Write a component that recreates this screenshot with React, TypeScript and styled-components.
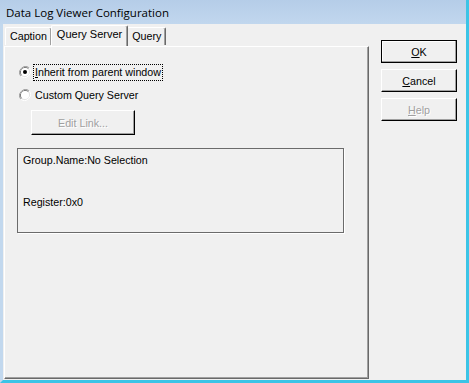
import styled, { createGlobalStyle } from "styled-components";

const GlobalStyle = createGlobalStyle`
  html, body {
    margin: 0;
    padding: 0;
    background: #f0f0f0;
    overflow: hidden;
  }
  * {
    box-sizing: border-box;
  }
`;

const Window = styled.div`
  width: 469px;
  height: 383px;
  display: flex;
  flex-direction: column;
  font-family: "Liberation Sans", Arial, sans-serif;
  font-size: 10.7px;
  color: #000;
  background: #f0f0f0;
`;

const TitleBar = styled.div`
  height: 24px;
  flex-shrink: 0;
  display: flex;
  align-items: center;
  padding-left: 6px;
  background: linear-gradient(#b5cde8, #c1d7ee);
  border-right: 3px solid #3cc4e6;
  font-family: "Open Sans", "Liberation Sans", sans-serif;
  font-size: 11.5px;
  color: #000;
`;

const Body = styled.div`
  flex: 1;
  display: flex;
  min-height: 0;
  border-left: 3px solid #c2d8ee;
  border-right: 3px solid #3cc4e6;
  border-bottom: 3px solid #3cc4e6;
  padding: 1px 0 1px 1px;
`;

const TabControl = styled.div`
  width: 365px;
  display: flex;
  flex-direction: column;
`;

const TabStrip = styled.div`
  height: 21px;
  display: flex;
  align-items: flex-end;
  padding-left: 1px;
  position: relative;
  z-index: 1;
`;

const Tab = styled.div<{ $active?: boolean }>`
  height: ${(p) => (p.$active ? 21 : 18)}px;
  padding: ${(p) => (p.$active ? "2px 5px 0" : "2px 4px 0")};
  margin: ${(p) => (p.$active ? "0 -1px 0 -1px" : "0 0 1px")};
  background: #f0f0f0;
  border-top: 1px solid #fff;
  border-left: 1px solid #fff;
  border-right: 1px solid #696969;
  box-shadow: inset -1px 0 0 #a0a0a0;
  border-radius: 2px 2px 0 0;
  white-space: nowrap;
  font-size: ${(p) => (p.$active ? 11 : 10.7)}px;
  position: relative;
  z-index: ${(p) => (p.$active ? 2 : 1)};
`;

const Panel = styled.div`
  flex: 1;
  border-top: 1px solid #fff;
  border-left: 1px solid #fff;
  border-right: 1px solid #696969;
  border-bottom: 1px solid #696969;
  box-shadow: inset -1px -1px 0 #a0a0a0;
  padding: 16px 0 0 14px;
  display: flex;
  flex-direction: column;
  align-items: flex-start;
`;

const RadioRow = styled.label`
  height: 18px;
  display: flex;
  align-items: center;
  gap: 3px;
  margin-bottom: 5px;
`;

const RadioLabel = styled.span<{ $focused?: boolean }>`
  padding: 1px 1px 2px;
  outline: ${(p) => (p.$focused ? "1px dotted #000" : "none")};
  outline-offset: 0;
`;

const ClassicButton = styled.div<{ $disabled?: boolean; $default?: boolean }>`
  height: 23px;
  display: flex;
  align-items: center;
  justify-content: center;
  background: #f0f0f0;
  border: 1px solid ${(p) => (p.$default ? "#000" : "#fff")};
  border-right-color: #000;
  border-bottom-color: #000;
  box-shadow: inset -1px -1px 0 #a0a0a0
    ${(p) => (p.$default ? ", inset 1px 1px 0 #fff" : "")};
  color: ${(p) => (p.$disabled ? "#a0a0a0" : "#000")};
  text-shadow: ${(p) => (p.$disabled ? "1px 1px 0 #fff" : "none")};
  white-space: nowrap;
`;

const EditLinkButton = styled(ClassicButton)`
  width: 104px;
  height: 25px;
  margin: 1px 0 0 12px;
`;

const InfoBox = styled.div`
  width: 327px;
  height: 85px;
  margin: 13px 0 0 -2px;
  border: 1px solid #6b6b6b;
  box-shadow: 1px 1px 0 #fff;
  padding: 5px 0 0 5px;
  display: flex;
  flex-direction: column;
  gap: 29px;
  line-height: 13px;
`;

const ButtonColumn = styled.div`
  margin-left: 12px;
  padding-top: 15px;
  width: 76px;
  display: flex;
  flex-direction: column;
  gap: 6px;
`;

const Mnemonic = styled.span`
  text-decoration: underline;
`;

function Radio({ checked }: { checked?: boolean }) {
  return (
    <svg width="12" height="12" viewBox="0 0 12 12">
      <path d="M10.2 1.8 A6 6 0 0 0 1.8 10.2" fill="none" stroke="#a0a0a0" strokeWidth="1" />
      <path d="M9.5 2.5 A5 5 0 0 0 2.5 9.5" fill="none" stroke="#696969" strokeWidth="1" />
      <path d="M1.8 10.2 A6 6 0 0 0 10.2 1.8" fill="none" stroke="#fff" strokeWidth="1" />
      <path d="M2.5 9.5 A5 5 0 0 0 9.5 2.5" fill="none" stroke="#e3e3e3" strokeWidth="1" />
      <circle cx="6" cy="6" r="4" fill="#fff" />
      {checked && <circle cx="6" cy="6" r="2" fill="#000" />}
    </svg>
  );
}

export default function App() {
  return (
    <>
      <GlobalStyle />
      <Window>
        <TitleBar>Data Log Viewer Configuration</TitleBar>
        <Body>
          <TabControl>
            <TabStrip>
              <Tab>Caption</Tab>
              <Tab $active>Query Server</Tab>
              <Tab>Query</Tab>
            </TabStrip>
            <Panel>
              <RadioRow>
                <Radio checked />
                <RadioLabel $focused>
                  <Mnemonic>I</Mnemonic>nherit from parent window
                </RadioLabel>
              </RadioRow>
              <RadioRow>
                <Radio />
                <RadioLabel>Custom Query Server</RadioLabel>
              </RadioRow>
              <EditLinkButton $disabled>Edit Link...</EditLinkButton>
              <InfoBox>
                <div>Group.Name:No Selection</div>
                <div>Register:0x0</div>
              </InfoBox>
            </Panel>
          </TabControl>
          <ButtonColumn>
            <ClassicButton $default>
              <Mnemonic>O</Mnemonic>K
            </ClassicButton>
            <ClassicButton>
              <Mnemonic>C</Mnemonic>ancel
            </ClassicButton>
            <ClassicButton $disabled>
              <Mnemonic>H</Mnemonic>elp
            </ClassicButton>
          </ButtonColumn>
        </Body>
      </Window>
    </>
  );
}
